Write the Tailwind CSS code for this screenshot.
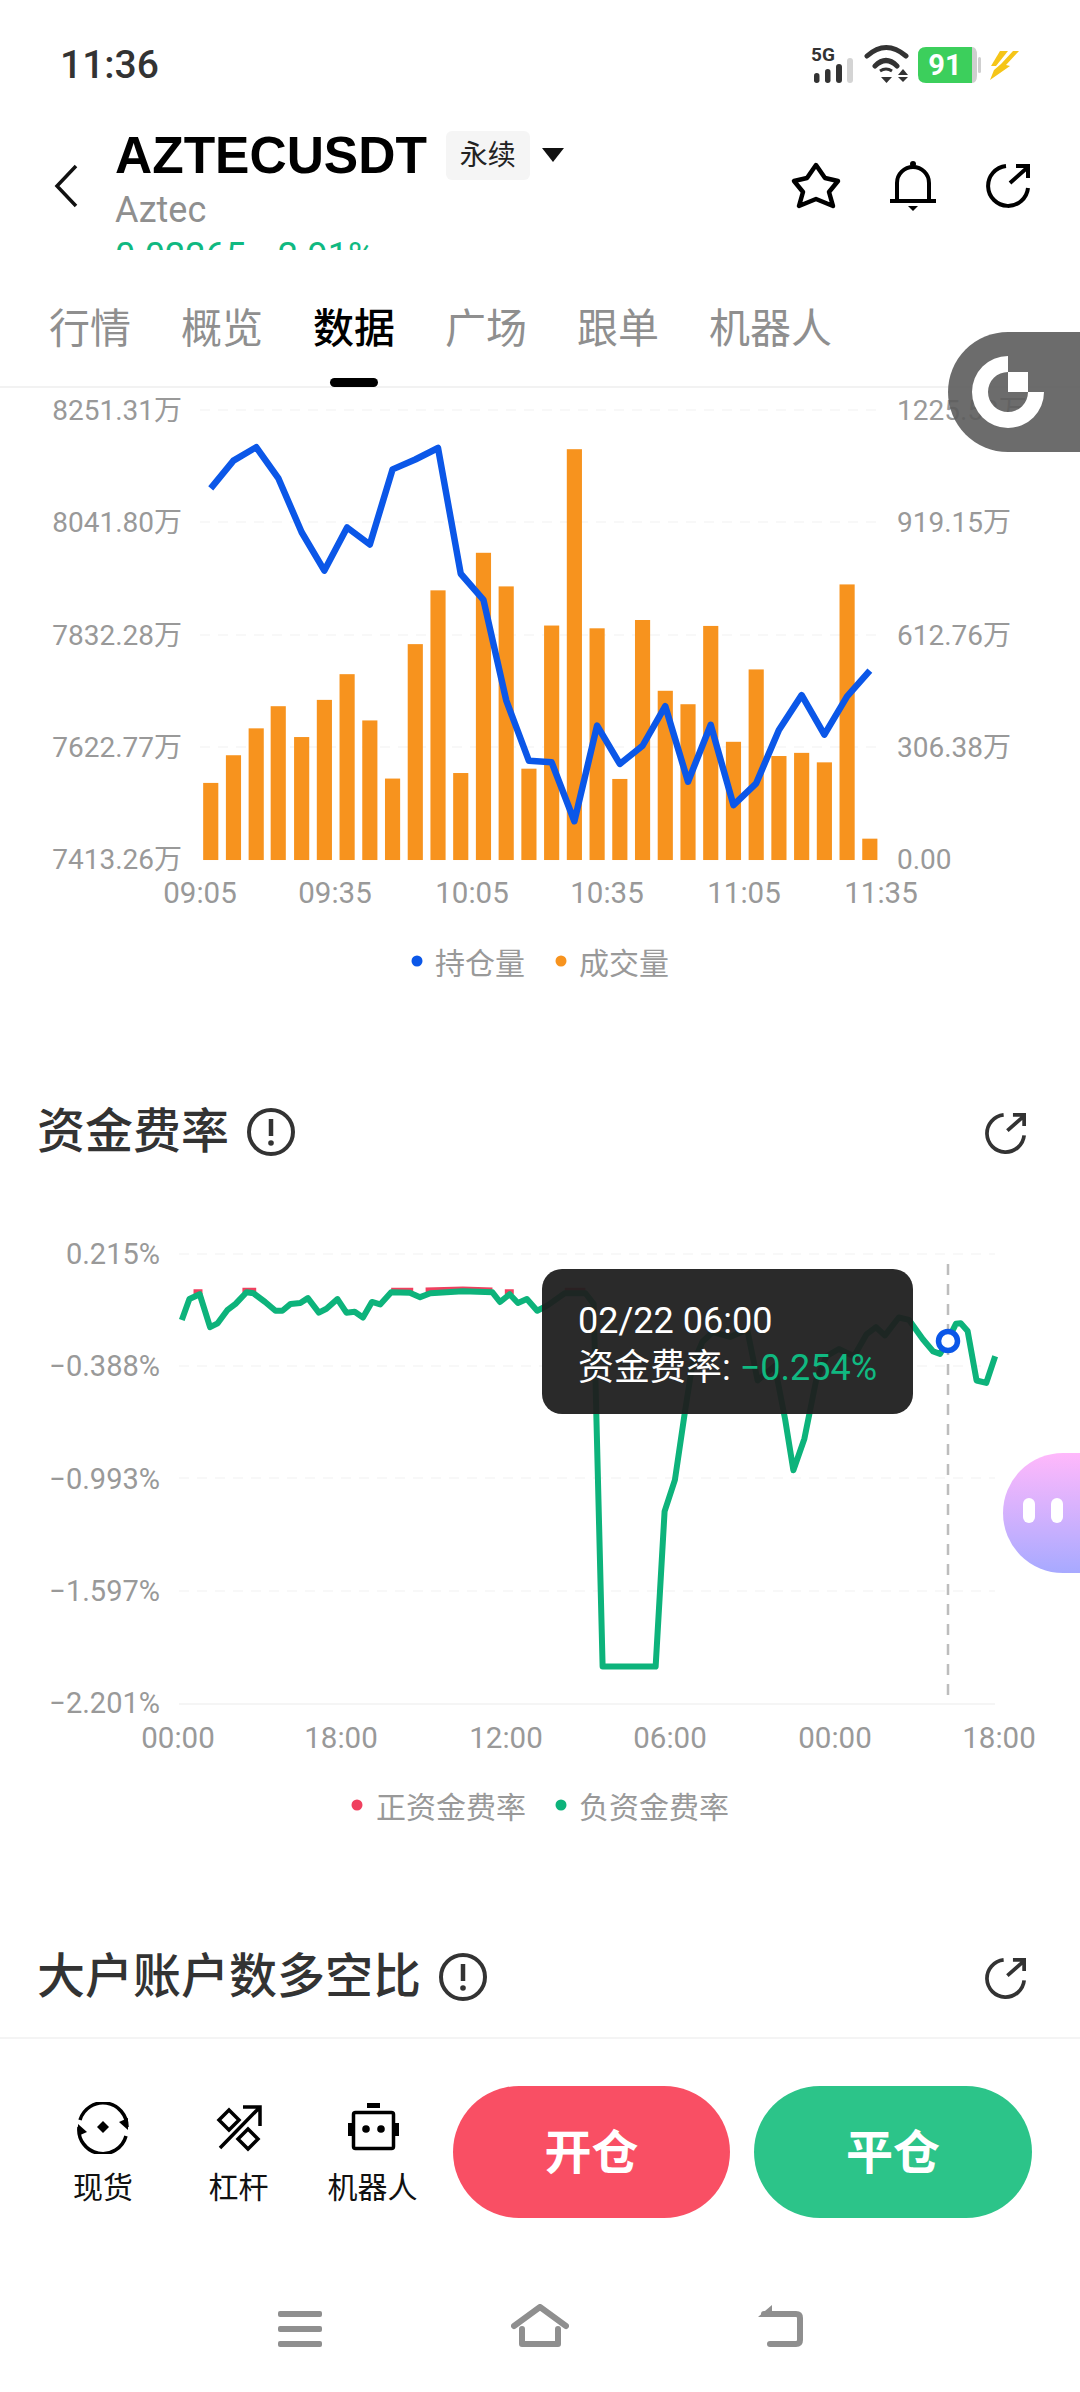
<!DOCTYPE html>
<html lang="zh">
<head>
<meta charset="utf-8">
<script src="https://cdn.jsdelivr.net/npm/@tailwindcss/browser@4"></script>
</head>
<body class="m-0 bg-white">
<div class="relative w-[1080px] h-[2392px] overflow-hidden bg-white flex flex-col font-['Roboto','Noto_Sans_CJK_SC',sans-serif] text-black">

  <!-- status bar -->
  <div class="h-[110px] shrink-0 flex justify-between items-start">
    <span class="ml-[60px] mt-[41px] text-[39px] leading-[48px] font-medium text-[#333]">11:36</span>
    <svg class="mt-[40px] mr-[40px]" width="240" height="50" viewBox="800 40 240 50">
      <text x="811" y="61" font-size="19" font-weight="700" fill="#333" font-family="Roboto">5G</text>
      <rect x="814" y="73" width="5.5" height="10" rx="2.7" fill="#333"/>
      <rect x="825" y="69" width="5.5" height="14" rx="2.7" fill="#333"/>
      <rect x="836" y="64" width="6" height="19" rx="3" fill="#333"/>
      <rect x="847" y="58" width="6" height="25" rx="3" fill="#d4d4d4"/>
      <path d="M867 56 Q886 39 906 56 M875 66 Q886 55 897 66" fill="none" stroke="#333" stroke-width="5" stroke-linecap="round"/>
      <path d="M880 71 Q886 67 892 71" fill="none" stroke="#333" stroke-width="3"/>
      <polygon points="881,77 892,77 886.500,83" fill="#333"/>
      <polygon points="903,69 908,75 898,75" fill="#333"/>
      <polygon points="898,77 908,77 903,82" fill="#333"/>
      <path d="M960 47 H972 Q977 47 977 55 V75 Q977 83 972 83 H960 Z" fill="#cfcfcf"/>
      <rect x="978" y="57" width="3" height="16" rx="1.500" fill="#cfcfcf"/>
      <path d="M926 47 H972 V83 H926 Q918 83 918 75 V55 Q918 47 926 47 Z" fill="#3ccf5c"/>
      <text x="945" y="75" font-size="29" font-weight="700" fill="#fff" text-anchor="middle" font-family="Roboto">91</text>
      <polygon points="1000,51 1008,51 996,66 991,66" fill="#f5c518"/>
      <polygon points="1013,51 1019,51 1006,65 1010,66 990,80 994,70 1001,64" fill="#f5c518"/>
    </svg>
  </div>

  <!-- header -->
  <div class="h-[154px] shrink-0 flex items-start">
    <svg class="ml-[54px] mt-[54px] shrink-0" width="24" height="44" viewBox="0 0 24 44">
      <path d="M22 2 L3 22 L22 42" fill="none" stroke="#111" stroke-width="3.500"/>
    </svg>
    <div class="ml-[37px] h-[140px] overflow-hidden pt-[20px] w-[500px]">
      <div class="flex items-center h-[50px]">
        <span class="font-['Liberation_Sans'] font-bold text-[51.5px] leading-[50px] text-black">AZTECUSDT</span>
        <span class="ml-[19px] w-[84px] h-[49px] rounded-[6px] bg-[#f5f5f5] text-[28px] text-[#222] flex items-center justify-center pt-[2px]">永续</span>
        <svg class="ml-[12px]" width="22" height="14" viewBox="0 0 22 14"><polygon points="0,0 22,0 11,14" fill="#111"/></svg>
      </div>
      <div class="mt-[10px] h-[40px] text-[36px] leading-[40px] text-[#8f8f8f]">Aztec</div>
      <div class="mt-[8px] text-[36px] leading-[36px] text-[#10b981] whitespace-nowrap">0.02265<span class="ml-[22px]">-2.91%</span></div>
    </div>
    <div class="ml-auto mr-[50px] mt-[50px] flex items-center">
      <svg width="54" height="50" viewBox="789 161 54 50">
        <polygon points="816,165 825,178 838,181 829,192 833,206 816,199 799,206 803,192 794,181 807,178" fill="none" stroke="#000" stroke-width="4.500" stroke-linejoin="round"/>
      </svg>
      <svg class="ml-[47px]" width="46" height="52" viewBox="890 160 46 52">
        <path d="M897 200 V183 A16 16 0 0 1 929 183 V200" fill="none" stroke="#000" stroke-width="4"/>
        <path d="M890 201 H936" stroke="#000" stroke-width="4"/>
        <circle cx="913" cy="164" r="3" fill="#000"/>
        <polygon points="908,206 918,206 913,211" fill="#000"/>
      </svg>
      <svg class="ml-[50px]" width="44" height="44" viewBox="0 0 44 44">
        <path d="M20 2 A20 20 0 1 0 42 24 M24 19 L42 3 M30 2 H42 V14" fill="none" stroke="#000" stroke-width="4"/>
      </svg>
    </div>
  </div>

  <!-- tabs -->
  <div class="relative h-[124px] shrink-0 border-b-2 border-[#f2f2f2] pl-[49px] flex gap-[50px] text-[41px] leading-[48px] text-[#8f8f8f] pt-[41px]">
    <span>行情</span>
    <span>概览</span>
    <span class="relative font-medium text-black">数据
      <span class="absolute left-[17px] top-[73px] w-[48px] h-[9px] rounded-full bg-black"></span>
    </span>
    <span>广场</span>
    <span>跟单</span>
    <span>机器人</span>
  </div>

  <!-- content -->
  <div class="flex-1 overflow-hidden relative">
    <svg class="block" width="1080" height="694" viewBox="0 388 1080 694" font-family="Roboto, 'Noto Sans CJK SC', sans-serif">
      <g stroke="#f6f6f6" stroke-width="1.500" stroke-dasharray="10 8">
        <path d="M200 410 H878 M200 522 H878 M200 635 H878 M200 747 H878"/>
      </g>
      <g fill="#999" font-size="28" dominant-baseline="central">
        <g text-anchor="end">
          <text x="182" y="410">8251.31万</text>
          <text x="182" y="522">8041.80万</text>
          <text x="182" y="635">7832.28万</text>
          <text x="182" y="747">7622.77万</text>
          <text x="182" y="859">7413.26万</text>
        </g>
        <text x="897" y="410">1225.53万</text>
        <text x="897" y="522">919.15万</text>
        <text x="897" y="635">612.76万</text>
        <text x="897" y="747">306.38万</text>
        <text x="897" y="859">0.00</text>
        <g text-anchor="middle" font-size="29.5">
          <text x="200" y="893">09:05</text>
          <text x="335" y="893">09:35</text>
          <text x="472" y="893">10:05</text>
          <text x="607" y="893">10:35</text>
          <text x="744" y="893">11:05</text>
          <text x="881" y="893">11:35</text>
        </g>
      </g>
      <g transform="translate(0,380) scale(0.6887,0.3954)">
        <g fill="#f7931e">
          <rect x="295" y="1019" width="22" height="195"/>
          <rect x="328" y="949" width="22" height="265"/>
          <rect x="361" y="881" width="22" height="333"/>
          <rect x="393" y="825" width="22" height="389"/>
          <rect x="427" y="903" width="22" height="311"/>
          <rect x="460" y="809" width="22" height="405"/>
          <rect x="493" y="744" width="22" height="470"/>
          <rect x="526" y="861" width="22" height="353"/>
          <rect x="559" y="1008" width="22" height="206"/>
          <rect x="592" y="668" width="22" height="546"/>
          <rect x="625" y="532" width="22" height="682"/>
          <rect x="658" y="994" width="22" height="220"/>
          <rect x="691" y="437" width="22" height="777"/>
          <rect x="724" y="522" width="22" height="692"/>
          <rect x="757" y="983" width="22" height="231"/>
          <rect x="790" y="621" width="22" height="593"/>
          <rect x="823" y="175" width="22" height="1039"/>
          <rect x="856" y="628" width="22" height="586"/>
          <rect x="889" y="1009" width="22" height="205"/>
          <rect x="922" y="607" width="22" height="607"/>
          <rect x="955" y="786" width="22" height="428"/>
          <rect x="988" y="820" width="22" height="394"/>
          <rect x="1021" y="622" width="22" height="592"/>
          <rect x="1054" y="915" width="22" height="299"/>
          <rect x="1087" y="732" width="22" height="482"/>
          <rect x="1120" y="951" width="22" height="263"/>
          <rect x="1153" y="943" width="22" height="271"/>
          <rect x="1186" y="967" width="22" height="247"/>
          <rect x="1219" y="517" width="22" height="697"/>
          <rect x="1252" y="1160" width="22" height="54"/>
        </g>
        <polyline vector-effect="non-scaling-stroke" fill="none" stroke="#0b57e8" stroke-width="6.5" stroke-linejoin="round" points="306,274 339,204 372,170 404,248 438,385 471,482 504,373 537,416 570,226 603,201 636,172 669,490 702,556 735,810 768,963 801,967 834,1116 867,874 900,971 933,925 966,825 999,1016 1032,872 1065,1075 1098,1020 1131,885 1164,797 1197,897 1230,800 1263,735"/>
      </g>
      <circle cx="417" cy="961" r="5.500" fill="#0b57e8"/>
      <text x="435" y="963" font-size="30" fill="#999" dominant-baseline="central">持仓量</text>
      <circle cx="561" cy="961" r="5.500" fill="#f7931e"/>
      <text x="579" y="963" font-size="30" fill="#999" dominant-baseline="central">成交量</text>
    </svg>

    <div class="h-[100px] pl-[37px] pr-[54px] flex items-center">
      <span class="text-[48px] leading-[60px] font-medium text-[#333]">资金费率</span>
      <svg class="ml-[18px]" width="48" height="48" viewBox="0 0 48 48">
        <circle cx="24" cy="24" r="22" fill="none" stroke="#333" stroke-width="4"/>
        <path d="M24 11 V28" stroke="#333" stroke-width="4.500"/><circle cx="24" cy="35" r="2.800" fill="#333"/>
      </svg>
      <svg class="ml-auto mt-[3px]" width="41" height="41" viewBox="0 0 44 44">
        <path d="M20 2 A20 20 0 1 0 42 24 M24 19 L42 3 M30 2 H42 V14" fill="none" stroke="#333" stroke-width="4"/>
      </svg>
    </div>

    <svg class="block" width="1080" height="745" viewBox="0 1182 1080 745" font-family="Roboto, 'Noto Sans CJK SC', sans-serif">
      <g stroke="#f6f6f6" stroke-width="1.500" stroke-dasharray="10 8">
        <path d="M179 1254 H995 M179 1366 H995 M179 1478 H995 M179 1591 H995"/>
      </g>
      <path d="M179 1704 H995" stroke="#f2f2f2" stroke-width="1.500"/>
      <g fill="#999" font-size="29" dominant-baseline="central">
        <g text-anchor="end">
          <text x="160" y="1254">0.215%</text>
          <text x="160" y="1366">−0.388%</text>
          <text x="160" y="1479">−0.993%</text>
          <text x="160" y="1591">−1.597%</text>
          <text x="160" y="1703">−2.201%</text>
        </g>
        <g text-anchor="middle" font-size="29.5">
          <text x="178" y="1738">00:00</text>
          <text x="341" y="1738">18:00</text>
          <text x="506" y="1738">12:00</text>
          <text x="670" y="1738">06:00</text>
          <text x="835" y="1738">00:00</text>
          <text x="999" y="1738">18:00</text>
        </g>
      </g>
      <path d="M948 1264 V1695" stroke="#bdbdbd" stroke-width="2.500" stroke-dasharray="11 9"/>
      <g transform="translate(0,1080) scale(0.6887,0.4847)">
        <path vector-effect="non-scaling-stroke" fill="none" stroke="#f0405f" stroke-width="5" d="M281 437 H294 M352 434 H372 M568 434 H600 M618 433 L672 431 L715 433 M733 437 H746 M820 434 H850"/>
        <polyline vector-effect="non-scaling-stroke" fill="none" stroke="#0db37b" stroke-width="6" stroke-linejoin="round" points="264,495 275,452 290,442 305,510 316,502 330,475 342,462 358,438 368,440 385,458 400,476 410,476 422,462 436,460 447,450 463,480 474,472 490,452 503,480 515,478 527,490 540,458 552,463 568,438 595,439 610,448 625,440 672,436 715,438 726,458 740,442 752,460 765,452 780,476 795,465 820,440 850,440 862,462 865,640 875,1210 952,1210 965,890 980,825 995,680 1005,590 1020,540 1035,520 1060,530 1085,515 1100,620 1125,590 1140,700 1152,805 1168,740 1185,620 1200,570 1218,555 1240,570 1258,525 1272,510 1285,527 1305,490 1320,495 1340,535 1355,560 1365,565 1375,540 1388,503 1395,502 1405,518 1418,620 1432,625 1445,570"/>
      </g>
      <circle cx="948" cy="1341" r="9.500" fill="#fff" stroke="#0b57e8" stroke-width="5.500"/>
      <circle cx="357" cy="1805" r="5.500" fill="#f0405f"/>
      <text x="376" y="1807" font-size="30" fill="#999" dominant-baseline="central">正资金费率</text>
      <circle cx="561" cy="1805" r="5.500" fill="#0db37b"/>
      <text x="579" y="1807" font-size="30" fill="#999" dominant-baseline="central">负资金费率</text>
    </svg>

    <div class="h-[100px] pl-[37px] pr-[54px] flex items-center">
      <span class="text-[48px] leading-[60px] font-medium text-[#333]">大户账户数多空比</span>
      <svg class="ml-[18px]" width="48" height="48" viewBox="0 0 48 48">
        <circle cx="24" cy="24" r="22" fill="none" stroke="#333" stroke-width="4"/>
        <path d="M24 11 V28" stroke="#333" stroke-width="4.500"/><circle cx="24" cy="35" r="2.800" fill="#333"/>
      </svg>
      <svg class="ml-auto mt-[3px]" width="41" height="41" viewBox="0 0 44 44">
        <path d="M20 2 A20 20 0 1 0 42 24 M24 19 L42 3 M30 2 H42 V14" fill="none" stroke="#333" stroke-width="4"/>
      </svg>
    </div>

    <!-- tooltip -->
    <div class="absolute left-[542px] top-[881px] w-[371px] h-[145px] rounded-[20px] bg-[#1f1f1f]/95 pl-[36px] pt-[29px] text-[36px] leading-[47px] text-white">
      <div>02/22 06:00</div>
      <div>资金费率: <span class="text-[#10b981]">−0.254%</span></div>
    </div>
  </div>

  <!-- bottom bar -->
  <div class="h-[355px] shrink-0 border-t-2 border-[#f4f4f4] flex flex-col">
    <div class="mt-[47px] h-[132px] pl-[75px] flex items-center">
      <div class="w-[56px] flex flex-col items-center text-[30px] leading-[36px] text-[#111] whitespace-nowrap">
        <svg width="54" height="52" viewBox="76 2102 54 52" class="mt-[4px] mb-[16px] shrink-0">
          <path d="M80 2120 A24 24 0 0 1 127 2127 M126 2136 A24 24 0 0 1 79 2127" fill="none" stroke="#000" stroke-width="3.500"/>
          <polygon points="128,2130 119,2122 128,2118" fill="#000"/>
          <polygon points="78,2124 87,2132 78,2136" fill="#000"/>
          <polygon points="103,2121 109,2127 103,2133 97,2127" fill="#000"/>
        </svg>
        <span>现货</span>
      </div>
      <div class="ml-[79px] w-[57px] flex flex-col items-center text-[30px] leading-[36px] text-[#111] whitespace-nowrap">
        <svg width="48" height="48" viewBox="212 2104 48 48" class="mt-[6px] mb-[18px] shrink-0">
          <path d="M217 2148 L257 2107 M240 2107 H257 V2126" fill="none" stroke="#000" stroke-width="3.500"/>
          <polygon points="226,2110 236,2120 226,2130 216,2120" fill="none" stroke="#000" stroke-width="3.500"/>
          <polygon points="245,2129 255,2139 245,2149 235,2139" fill="none" stroke="#000" stroke-width="3.500"/>
        </svg>
        <span>杠杆</span>
      </div>
      <div class="ml-[62px] w-[87px] flex flex-col items-center text-[30px] leading-[36px] text-[#111] whitespace-nowrap">
        <svg width="52" height="50" viewBox="347 2102 52 50" class="mt-[4px] mb-[18px] shrink-0">
          <rect x="367" y="2103" width="13" height="5" fill="#000"/>
          <rect x="353.500" y="2112.500" width="40" height="36" rx="2" fill="none" stroke="#000" stroke-width="3.500"/>
          <rect x="348" y="2123" width="4" height="13" fill="#000"/>
          <rect x="395" y="2123" width="4" height="13" fill="#000"/>
          <circle cx="366" cy="2129" r="3.800" fill="#000"/>
          <circle cx="381" cy="2129" r="3.800" fill="#000"/>
        </svg>
        <span>机器人</span>
      </div>
      <div class="ml-[37px] w-[277px] h-[132px] rounded-full bg-[#f94f64] text-white font-bold text-[47px] flex items-center justify-center pt-[2px]">开仓</div>
      <div class="ml-[24px] w-[278px] h-[132px] rounded-full bg-[#2cc489] text-white font-bold text-[47px] flex items-center justify-center pt-[2px]">平仓</div>
    </div>
    <div class="mt-[86px] flex items-start">
      <div class="ml-[278px] w-[44px] mt-[7px] flex flex-col gap-[9px]">
        <div class="h-[6px] rounded-[2px] bg-[#8f8f8f]"></div>
        <div class="h-[6px] rounded-[2px] bg-[#8f8f8f]"></div>
        <div class="h-[6px] rounded-[2px] bg-[#8f8f8f]"></div>
      </div>
      <svg class="ml-[189px]" width="58" height="44" viewBox="511 2304 58 44">
        <path d="M514 2326 L540 2307 L566 2326 M522 2329 V2344 H558 V2329" fill="none" stroke="#8f8f8f" stroke-width="6" stroke-linecap="round" stroke-linejoin="round"/>
      </svg>
      <svg class="ml-[187px]" width="48" height="44" viewBox="756 2304 48 44">
        <path d="M764 2314 H796 Q800 2314 800 2318 V2340 Q800 2344 796 2344 H770" fill="none" stroke="#8f8f8f" stroke-width="6" stroke-linecap="round"/>
        <polygon points="772,2305 772,2317 758,2317" fill="#8f8f8f"/>
      </svg>
    </div>
  </div>

  <!-- floating widgets -->
  <div class="absolute left-[948px] top-[332px] w-[132px] h-[120px] rounded-l-[60px] bg-[#5c5c5c]/90">
    <svg class="absolute left-[22px] top-[22px]" width="76" height="76" viewBox="0 0 76 76">
      <path d="M38 2 A36 36 0 1 0 74 38 H58 A20 20 0 1 1 38 18 Z" fill="#fff"/>
      <rect x="38" y="18" width="20" height="20" fill="#fff"/>
    </svg>
  </div>
  <div class="absolute left-[1003px] top-[1453px] w-[77px] h-[120px] rounded-l-[60px] bg-gradient-to-b from-[#ffb8fb] to-[#a7a9ff]">
    <div class="absolute left-[20px] top-[45px] w-[12px] h-[25px] rounded-full bg-white"></div>
    <div class="absolute left-[48px] top-[45px] w-[12px] h-[25px] rounded-full bg-white"></div>
  </div>
</div>
</body>
</html>
